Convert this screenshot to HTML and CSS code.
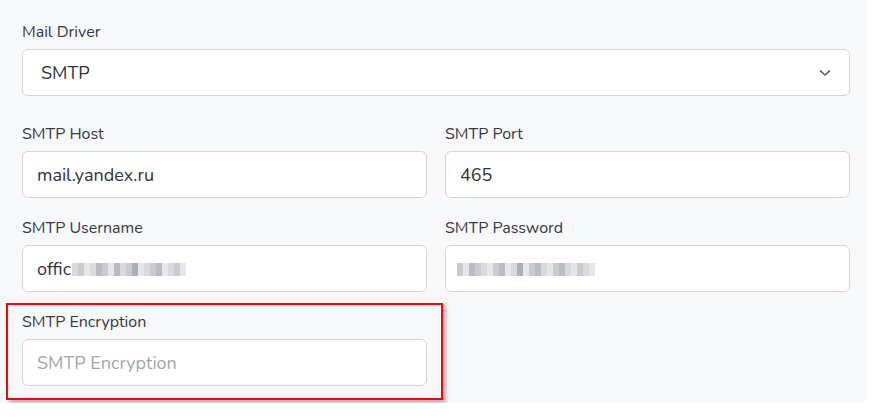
FILE: index.html
```html
<!DOCTYPE html>
<html>
<head>
<meta charset="utf-8">
<link rel="stylesheet" href="styles.css">
</head>
<body>
<div class="panel">
  <div class="field wide first">
    <div class="label">Mail Driver</div>
    <div class="control select">
      <span class="value">SMTP</span>
      <svg class="chev" width="12" height="8" viewBox="0 0 12 8"><path d="M1.5 1.8 L6 6 L10.5 1.8" fill="none" stroke="#5b606c" stroke-width="1.6" stroke-linecap="round" stroke-linejoin="round"/></svg>
    </div>
  </div>
  <div class="grid">
    <div class="field">
      <div class="label">SMTP Host</div>
      <div class="control"><span class="value">mail.yandex.ru</span></div>
    </div>
    <div class="field">
      <div class="label">SMTP Port</div>
      <div class="control"><span class="value">465</span></div>
    </div>
    <div class="field">
      <div class="label">SMTP Username</div>
      <div class="control"><span class="value">offic</span><span class="blur u"><i class="p1"></i><i class="p2"></i><i class="p3"></i><i class="p1"></i><i class="p4"></i><i class="p2"></i><i class="p3"></i><i class="p4"></i><i class="p1"></i><i class="p2"></i><i class="p5"></i><i class="p3"></i><i class="p1"></i><i class="p2"></i><i class="p4"></i><i class="p3"></i><i class="p1"></i><i class="p2"></i><i class="p3"></i></span></div>
    </div>
    <div class="field">
      <div class="label">SMTP Password</div>
      <div class="control"><span class="blur pw"><i class="p2"></i><i class="p3"></i><i class="p4"></i><i class="p2"></i><i class="p1"></i><i class="p3"></i><i class="p2"></i><i class="p4"></i><i class="p3"></i><i class="p1"></i><i class="p5"></i><i class="p3"></i><i class="p2"></i><i class="p4"></i><i class="p1"></i><i class="p3"></i><i class="p2"></i><i class="p4"></i><i class="p1"></i><i class="p3"></i><i class="p2"></i><i class="p1"></i><i class="p3"></i></span></div>
    </div>
    <div class="field marked">
      <div class="label">SMTP Encryption</div>
      <div class="control"><span class="placeholder">SMTP Encryption</span></div>
    </div>
  </div>
</div>
</body>
</html>
```
FILE: styles.css
```css
html, body {
  margin: 0;
  padding: 0;
  background: #ffffff;
}
body {
  font-family: "Nunito", "Lato", "Open Sans", sans-serif;
  color: #333740;
}
.panel {
  width: 867px;
  box-sizing: border-box;
  padding: 22px 17px 17px 22px;
  background: #f7f8fa;
  border-bottom-right-radius: 7px;
}
.field.first {
  margin-bottom: 28px;
}
.grid {
  display: grid;
  grid-template-columns: 405px 405px;
  column-gap: 18px;
  row-gap: 20px;
}
.label {
  font-size: 16px;
  line-height: 20px;
  height: 20px;
  margin-bottom: 7px;
  color: #353944;
}
.control {
  box-sizing: border-box;
  height: 47px;
  background: #ffffff;
  border: 1px solid #d3d5da;
  border-radius: 6px;
  display: flex;
  align-items: center;
  padding: 0 14px;
  font-size: 18px;
  color: #2f333b;
}
.select {
  padding-left: 18px;
  padding-right: 18px;
  justify-content: space-between;
}
.placeholder {
  color: #a3a6ad;
}
.blur {
  display: inline-flex;
  height: 13px;
  margin-top: 2px;
}
.blur i {
  display: block;
  width: 6px;
  height: 13px;
}
.blur.u { margin-left: 1px; }
.blur.pw { margin-left: -3px; }
.blur i.p1 { background: #d9dadd; }
.blur i.p2 { background: #c9cbd0; }
.blur i.p3 { background: #e6e7ea; }
.blur i.p4 { background: #b9bcc3; }
.blur i.p5 { background: #aab0bb; }
.marked {
  position: relative;
}
.marked::after {
  content: "";
  position: absolute;
  left: -16px;
  right: -16px;
  top: -9px;
  bottom: -14px;
  border: 2px solid #ff0000;
  box-shadow: 3px 3px 4px rgba(0, 0, 0, 0.28);
  pointer-events: none;
}
```
